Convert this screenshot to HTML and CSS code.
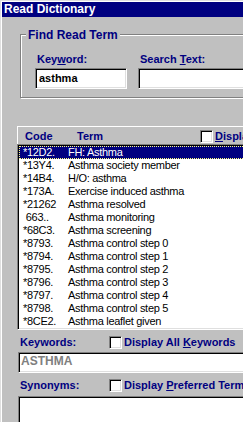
FILE: index.html
```html
<!DOCTYPE html>
<html>
<head>
<meta charset="utf-8">
<title>Read Dictionary</title>
<link rel="stylesheet" href="styles.css">
</head>
<body>
<div class="window">
  <div class="frame">
    <div class="titlebar">Read Dictionary</div>
    <div class="client">
      <div class="group">
        <div class="legend">Find Read Term</div>
        <div class="fields">
          <div class="field">
            <label class="lbl">Key<u>w</u>ord:</label>
            <div class="input kw-input">asthma</div>
          </div>
          <div class="field">
            <label class="lbl">Search <u>T</u>ext:</label>
            <div class="input st-input"></div>
          </div>
        </div>
      </div>

      <div class="list-header">
        <span class="col-code">Code</span>
        <span class="col-term">Term</span>
        <span class="check"><span class="box"></span><span class="check-text"><u>D</u>isplay All</span></span>
      </div>
      <div class="list">
        <div class="row selected"><span class="code">*12D2.</span><span class="term">FH: Asthma</span></div>
        <div class="row"><span class="code">*13Y4.</span><span class="term">Asthma society member</span></div>
        <div class="row"><span class="code">*14B4.</span><span class="term">H/O: asthma</span></div>
        <div class="row"><span class="code">*173A.</span><span class="term">Exercise induced asthma</span></div>
        <div class="row"><span class="code">*21262</span><span class="term">Asthma resolved</span></div>
        <div class="row"><span class="code"> 663..</span><span class="term">Asthma monitoring</span></div>
        <div class="row"><span class="code">*68C3.</span><span class="term">Asthma screening</span></div>
        <div class="row"><span class="code">*8793.</span><span class="term">Asthma control step 0</span></div>
        <div class="row"><span class="code">*8794.</span><span class="term">Asthma control step 1</span></div>
        <div class="row"><span class="code">*8795.</span><span class="term">Asthma control step 2</span></div>
        <div class="row"><span class="code">*8796.</span><span class="term">Asthma control step 3</span></div>
        <div class="row"><span class="code">*8797.</span><span class="term">Asthma control step 4</span></div>
        <div class="row"><span class="code">*8798.</span><span class="term">Asthma control step 5</span></div>
        <div class="row"><span class="code">*8CE2.</span><span class="term">Asthma leaflet given</span></div>
      </div>

      <div class="opt-row kw-row">
        <span class="opt-label">Keywords:</span>
        <span class="check"><span class="box"></span><span class="check-text">Display All <u>K</u>eywords</span></span>
      </div>
      <div class="textbox kwbox">ASTHMA</div>

      <div class="opt-row syn-row">
        <span class="opt-label">Synonyms:</span>
        <span class="check"><span class="box"></span><span class="check-text">Display <u>P</u>referred Terms</span></span>
      </div>
      <div class="textbox synbox"></div>
    </div>
  </div>
</div>
</body>
</html>
```

FILE: styles.css
```css
html, body {
  margin: 0;
  padding: 0;
  overflow: hidden;
  background: #c0c0c0;
}
body {
  font-family: "Liberation Sans", Arial, sans-serif;
  color: #000;
}
.window {
  width: 380px;
  height: 422px;
  box-sizing: border-box;
  border-top: 1px solid #dfdfdf;
  border-left: 1px solid #dfdfdf;
}
.frame {
  height: 100%;
  box-sizing: border-box;
  border-top: 1px solid #fff;
  border-left: 1px solid #fff;
}
.titlebar {
  height: 15px;
  line-height: 15px;
  background: #000080;
  color: #fff;
  font-weight: bold;
  font-size: 12px;
  padding-left: 2px;
}
.client {
  display: flex;
  flex-direction: column;
  align-items: flex-start;
}

/* group box */
.group {
  margin: 17px 0 0 18px;
  width: 340px;
  border: 1px solid #808080;
  box-shadow: inset 1px 1px #fff, 1px 1px #fff;
  padding: 0 0 8px 14px;
}
.legend {
  display: table;
  margin: -7px 0 0 -9px;
  padding: 0 2px;
  background: #c0c0c0;
  color: #000080;
  font-weight: bold;
  font-size: 12px;
  line-height: 14px;
}
.fields {
  display: flex;
  gap: 11px;
  margin-top: 11px;
}
.field {
  display: flex;
  flex-direction: column;
  gap: 2px;
}
.lbl {
  padding-left: 2px;
  color: #000080;
  font-weight: bold;
  font-size: 11px;
  line-height: 13px;
}
.input {
  height: 21px;
  box-sizing: border-box;
  background: #fff;
  border-top: 1px solid #808080;
  border-left: 1px solid #808080;
  border-bottom: 1px solid #fff;
  border-right: 1px solid #fff;
  box-shadow: inset 1px 1px #000, inset -1px -1px #dfdfdf;
  padding: 3px 0 0 3px;
  font-weight: bold;
  font-size: 11px;
  line-height: 13px;
}
.kw-input { width: 92px; }
.st-input { width: 200px; }

/* list header */
.list-header {
  margin: 28px 0 0 15px;
  width: 340px;
  height: 18px;
  box-sizing: border-box;
  border-top: 1px solid #fff;
  border-left: 1px solid #fff;
  padding: 1px 0 0 7px;
  display: flex;
  align-items: center;
  color: #000080;
  font-weight: bold;
  font-size: 11px;
  line-height: 13px;
}
.col-code { width: 52px; }
.col-term { width: 123px; }

.check {
  display: flex;
  align-items: center;
  gap: 2px;
  color: #000080;
  font-weight: bold;
  font-size: 11px;
  line-height: 13px;
  white-space: nowrap;
}
.box {
  width: 13px;
  height: 13px;
  box-sizing: border-box;
  background: #fff;
  border-top: 1px solid #808080;
  border-left: 1px solid #808080;
  border-bottom: 1px solid #fff;
  border-right: 1px solid #fff;
  box-shadow: inset 1px 1px #000, inset -1px -1px #dfdfdf;
}

/* list */
.list {
  margin-left: 15px;
  width: 340px;
  box-sizing: border-box;
  background: #fff;
  border-top: 1px solid #808080;
  border-left: 1px solid #808080;
  border-bottom: 1px solid #fff;
  border-right: 1px solid #fff;
  box-shadow: inset 1px 1px #000, inset -1px -1px #dfdfdf;
  padding: 1px;
}
.row {
  display: flex;
  height: 13px;
  line-height: 13px;
  font-size: 11px;
  letter-spacing: -0.3px;
  padding-left: 4px;
  white-space: pre;
}
.row .code { width: 45px; }
.row.selected {
  background: #000080;
  color: #fff;
  outline: 1px dotted #ffff80;
  outline-offset: -1px;
}

/* keywords / synonyms */
.opt-row {
  margin: 6px 0 0 18px;
  height: 13px;
  display: flex;
  align-items: center;
}
.opt-label {
  width: 89px;
  color: #000080;
  font-weight: bold;
  font-size: 11px;
  line-height: 13px;
}
.textbox {
  margin: 3px 0 0 16px;
  width: 340px;
  height: 21px;
  box-sizing: border-box;
  background: #fff;
  border-top: 1px solid #808080;
  border-left: 1px solid #808080;
  border-bottom: 1px solid #fff;
  border-right: 1px solid #fff;
  box-shadow: inset 1px 1px #000, inset -1px -1px #dfdfdf;
  padding: 1px 0 0 2px;
}
.kwbox {
  color: #808080;
  font-weight: bold;
  font-size: 12px;
  line-height: 14px;
}
.syn-row { margin-top: 6px; }
.synbox {
  margin-top: 4px;
  height: 60px;
}
```
